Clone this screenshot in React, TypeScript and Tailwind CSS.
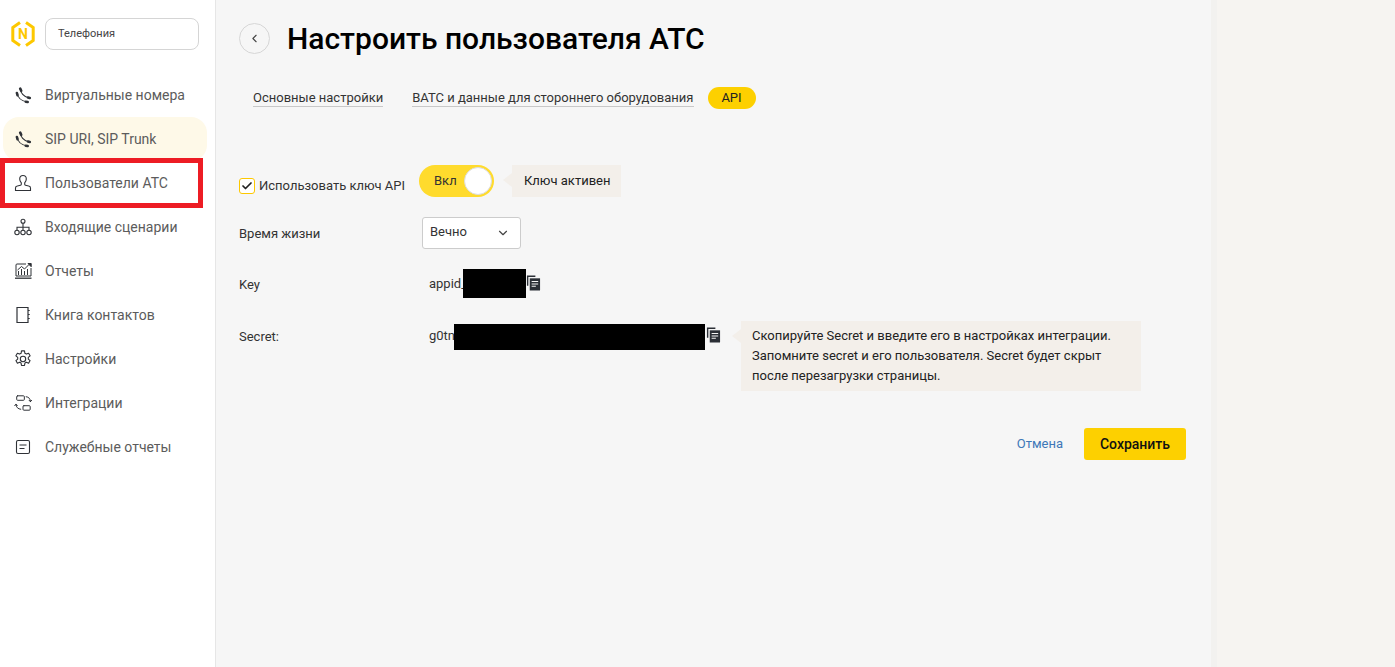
import React from 'react';
import { ChevronDown, ChevronLeft, Check } from 'lucide-react';

const PhoneIcon = () => (
  <svg width="18" height="18" viewBox="0 0 18 18" fill="none" stroke="#2f3237" strokeWidth="1.1" strokeLinecap="round">
    <path d="M6.500 2.800c0 4 3 8 8.500 9.200" />
    <path d="M3 7c.5 4 4 8 10.500 9" />
    <path d="M6.200 2.600l1 2.200M14 11.600l1.800.4M2.900 7l.6 2.200M11.800 15.700l1.900.3" strokeWidth="2.600" />
  </svg>
);

const UserIcon = () => (
  <svg width="18" height="18" viewBox="0 0 18 18" fill="none" stroke="#2f3237" strokeWidth="1.1">
    <path d="M9 1.500c-2.100 0-3.300 1.500-3.300 3.400 0 1.700.8 3 1.600 3.900v1.500c0 .5-.3.800-.8.900l-3.200.8c-1 .2-1.800 1-1.800 2v2.500h15v-2.500c0-1-.8-1.800-1.800-2l-3.200-.8c-.5-.1-.8-.4-.8-.9V8.800c.8-.9 1.600-2.200 1.600-3.900 0-1.900-1.200-3.400-3.300-3.400z" />
  </svg>
);

const TreeIcon = () => (
  <svg width="18" height="18" viewBox="0 0 18 18" fill="none" stroke="#2f3237" strokeWidth="1.1">
    <circle cx="9" cy="3.300" r="2" />
    <circle cx="3" cy="14.500" r="2.200" />
    <circle cx="9" cy="14.500" r="2.200" />
    <circle cx="15" cy="14.500" r="2.200" />
    <path d="M9 5.300v7M3 12.300V9.200h12v3.100" />
  </svg>
);

const ReportIcon = () => (
  <svg width="18" height="18" viewBox="0 0 18 18" fill="none" stroke="#2f3237" strokeWidth="1">
    <path d="M12 2H3a1 1 0 0 0-1 1v11h15V6" />
    <path d="M1 16.200h16.500" strokeWidth="1.300" />
    <path d="M4.500 13V9M7.500 13V7M10.500 13V9M13.500 13V7" />
    <path d="M3.500 8 7.500 4.500l3 2.500 4.500-4.500" />
    <path d="M14 1.500h3.200v3.200z" fill="#2f3237" />
  </svg>
);

const BookIcon = () => (
  <svg width="18" height="18" viewBox="0 0 18 18" fill="none" stroke="#2f3237" strokeWidth="1.2">
    <path d="M3 1.500h11v15H3z" />
    <path d="M14 4.500h1.700M14 8.500h1.700M14 12.500h1.700" />
  </svg>
);

const GearIcon = () => (
  <svg width="18" height="18" viewBox="0 0 18 18" fill="none" stroke="#2f3237" strokeWidth="1.1" strokeLinejoin="round">
    <circle cx="9" cy="9" r="2.700" />
    <path d="M7.500.9h3l.4 2.400 1.500.8 2.200-.9 1.500 2.600-1.800 1.500v1.800l1.800 1.500-1.500 2.600-2.200-.9-1.500.8-.4 2.400h-3l-.4-2.400-1.500-.8-2.200.9-1.500-2.600 1.800-1.500V7.300L1.900 5.800l1.500-2.600 2.200.9 1.500-.8z" />
  </svg>
);

const IntegrationIcon = () => (
  <svg width="20" height="18" viewBox="0 0 20 18" fill="none" stroke="#2f3237" strokeWidth="1.1" strokeLinecap="round">
    <rect x="3" y="1" width="8.500" height="5" rx="1" />
    <rect x="10" y="12" width="8" height="5" rx="1" />
    <path d="M13.500 2c3 .3 4.800 2.300 4.800 5.500M18.300 7.500l1.300-1.500M18.300 7.500 16.800 6" />
    <path d="M7.500 16c-3-.3-5.300-2.300-5.300-5.500M2.200 10.500.8 12M2.200 10.500 3.700 12" />
  </svg>
);

const ListIcon = () => (
  <svg width="18" height="18" viewBox="0 0 18 18" fill="none" stroke="#2f3237" strokeWidth="1.1">
    <rect x="2.500" y="2.500" width="13" height="13" rx="1.500" />
    <path d="M5.500 7h7M5.500 10.500h5" />
  </svg>
);

const CopyIcon = () => (
  <svg width="15" height="16" viewBox="0 0 16 16" className="shrink-0">
    <path d="M1 0h9v1.500H2.500V11H1z" fill="#2b2f36" />
    <path d="M4 3h11v13H4z" fill="#2b2f36" />
    <path d="M6 6.500h7M6 9h7M6 11.500h4.500" stroke="#f5f5f5" strokeWidth="1.100" />
  </svg>
);

const navItems = [
  { label: 'Виртуальные номера', icon: <PhoneIcon /> },
  { label: 'SIP URI, SIP Trunk', icon: <PhoneIcon />, active: true },
  { label: 'Пользователи АТС', icon: <UserIcon /> },
  { label: 'Входящие сценарии', icon: <TreeIcon /> },
  { label: 'Отчеты', icon: <ReportIcon /> },
  { label: 'Книга контактов', icon: <BookIcon /> },
  { label: 'Настройки', icon: <GearIcon /> },
  { label: 'Интеграции', icon: <IntegrationIcon /> },
  { label: 'Служебные отчеты', icon: <ListIcon /> },
];

const Sidebar = () => (
  <aside className="relative w-[216px] shrink-0 bg-white border-r border-[#e6e6e6] px-[3px]">
    <div className="flex items-center h-[32px] mt-[18px] ml-[8px]">
      <svg width="24" height="26" viewBox="0 0 24 26" fill="none" className="shrink-0">
        <path d="M9 1.500 1.800 6.500v13L9 24.500M15 1.500l7.200 5v13L15 24.500" stroke="#fdc800" strokeWidth="3" />
        <text x="12" y="18" textAnchor="middle" fontSize="14" fontWeight="700" fill="#fdc800" fontFamily="Roboto, sans-serif">N</text>
      </svg>
      <div className="ml-[10px] w-[154px] h-[32px] flex items-center pl-[12px] bg-white border border-[#d5d5d5] rounded-lg text-[11px] text-[#444]">
        Телефония
      </div>
    </div>
    <nav className="mt-[23px] flex flex-col">
      {navItems.map((item) => (
        <div
          key={item.label}
          className={`flex items-center h-[44px] w-[204px] pl-[11px] rounded-2xl text-[14px] text-[#5c5c5c] ${item.active ? 'bg-[#fef9e8]' : ''}`}
        >
          <span className="w-[18px] flex justify-center shrink-0">{item.icon}</span>
          <span className="ml-[13px] whitespace-nowrap">{item.label}</span>
        </div>
      ))}
    </nav>
    {/* red annotation over the menu */}
    <div className="absolute left-0 top-[158px] w-[203px] h-[50px] border-[5px] border-[#ed1c24]" />
  </aside>
);

const Tab = ({ children }: { children: React.ReactNode }) => (
  <span className="border-b border-[#c8c8c8] leading-[17px] h-[18px] whitespace-nowrap">{children}</span>
);

const Arrow = ({ children, className }: { children: React.ReactNode; className: string }) => (
  <div className={`relative bg-[#f3efea] text-[13px] text-[#222] ${className}`}>
    <span className="absolute left-[-9px] top-[8px] w-0 h-0 border-y-[7px] border-y-transparent border-r-[9px] border-r-[#f3efea]" />
    {children}
  </div>
);

export default function App() {
  return (
    <div className="flex h-[667px] w-[1395px] overflow-hidden bg-[#f6f6f6] text-[13px] text-[#333] font-['Roboto',sans-serif]">
      <Sidebar />
      <main className="w-[995px] shrink-0 pl-[23px] pr-[25px]">
        <div className="flex items-center mt-[23px] h-[31px]">
          <div className="w-[31px] h-[31px] rounded-full border border-[#d6d6d6] flex items-center justify-center">
            <ChevronLeft size={13} color="#444" />
          </div>
          <h1 className="ml-[17px] text-[30px] font-medium text-black whitespace-nowrap">Настроить пользователя АТС</h1>
        </div>

        <div className="flex items-center gap-[29px] mt-[33px] ml-[14px] h-[22px]">
          <Tab>Основные настройки</Tab>
          <div className="flex items-center gap-[14px]">
            <Tab>ВАТС и данные для стороннего оборудования</Tab>
            <span className="w-[48px] h-[22px] rounded-full bg-[#fdd000] flex items-center justify-center text-[#222]">API</span>
          </div>
        </div>

        <div className="flex items-center mt-[56px] h-[32px]">
          <div className="w-[180px] flex items-center mt-[9px]">
            <span className="w-[16px] h-[16px] rounded-[3px] border border-[#fdc800] bg-white flex items-center justify-center">
              <Check size={12} strokeWidth={3.5} color="#222" />
            </span>
            <span className="ml-[4px] whitespace-nowrap">Использовать ключ API</span>
          </div>
          <div className="w-[75px] h-[32px] rounded-full bg-[#ffdb2d] flex items-center justify-between pl-[15px] pr-[2px] text-[#333]">
            <span>Вкл</span>
            <span className="w-[28px] h-[28px] rounded-full bg-white border border-[#ddd]" />
          </div>
          <Arrow className="ml-[18px] w-[109px] h-[32px] flex items-center pl-[12px]">Ключ активен</Arrow>
        </div>

        <div className="flex items-center mt-[20px] h-[32px]">
          <span className="w-[183px] mt-[2px]">Время жизни</span>
          <div className="w-[99px] h-[32px] rounded-[3px] border border-[#ccc] bg-white flex items-center justify-between pl-[7px] pr-[10px] text-[#333]">
            <span className="-mt-[3px]">Вечно</span>
            <ChevronDown size={14} color="#444" />
          </div>
        </div>

        <div className="flex items-center mt-[20px] h-[29px]">
          <span className="w-[190px] mt-[3px]">Key</span>
          <span className="flex items-center">
            <span className="w-[34px] whitespace-nowrap">appid_</span>
            <span className="w-[63px] h-[29px] bg-black" />
            <span className="-mt-[1px]"><CopyIcon /></span>
          </span>
        </div>

        <div className="flex items-start mt-[26px]">
          <span className="w-[190px] mt-[3px]">Secret:</span>
          <span className="flex items-center">
            <span className="w-[25px] -mt-[2px] whitespace-nowrap">g0tn</span>
            <span className="w-[251px] h-[26px] bg-black" />
            <span className="-mt-[4px] ml-[1px]"><CopyIcon /></span>
          </span>
          <Arrow className="ml-[20px] -mt-[3px] w-[400px] h-[70px] pl-[11px] pt-[5px] leading-[20px]">
            Скопируйте Secret и введите его в настройках интеграции.
            <br />
            Запомните secret и его пользователя. Secret будет скрыт
            <br />
            после перезагрузки страницы.
          </Arrow>
        </div>

        <div className="flex items-center justify-end gap-[21px] mt-[37px]">
          <span className="text-[#3d78b8]">Отмена</span>
          <span className="w-[102px] h-[32px] rounded-[3px] bg-[#fdd000] flex items-center justify-center text-[14px] font-medium text-[#111]">
            Сохранить
          </span>
        </div>
      </main>
      <div className="flex-1 bg-[#f6f4f1] border-l-[6px] border-[#f2f1ef]" />
    </div>
  );
}
